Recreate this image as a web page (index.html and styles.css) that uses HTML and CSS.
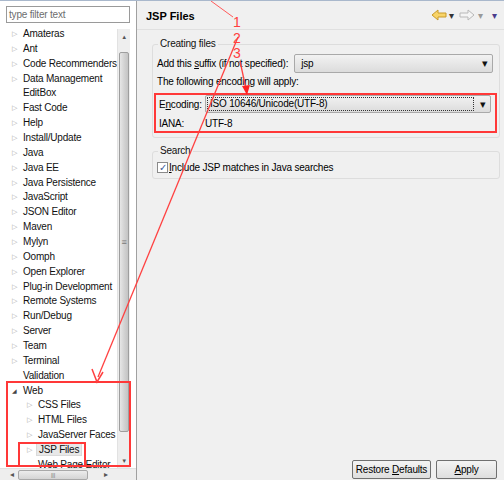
FILE: index.html
```html
<!DOCTYPE html>
<html>
<head>
<meta charset="utf-8">
<link rel="stylesheet" href="styles.css">
</head>
<body>
<div class="app">
  <div class="left">
    <div class="filter">type filter text</div>
    <div class="treewrap">
      <ul class="tree">
        <li><span class="tw">▷</span>Amateras</li>
        <li><span class="tw">▷</span>Ant</li>
        <li><span class="tw">▷</span>Code Recommenders</li>
        <li><span class="tw">▷</span>Data Management</li>
        <li><span class="tw"></span>EditBox</li>
        <li><span class="tw">▷</span>Fast Code</li>
        <li><span class="tw">▷</span>Help</li>
        <li><span class="tw">▷</span>Install/Update</li>
        <li><span class="tw">▷</span>Java</li>
        <li><span class="tw">▷</span>Java EE</li>
        <li><span class="tw">▷</span>Java Persistence</li>
        <li><span class="tw">▷</span>JavaScript</li>
        <li><span class="tw">▷</span>JSON Editor</li>
        <li><span class="tw">▷</span>Maven</li>
        <li><span class="tw">▷</span>Mylyn</li>
        <li><span class="tw">▷</span>Oomph</li>
        <li><span class="tw">▷</span>Open Explorer</li>
        <li><span class="tw">▷</span>Plug-in Development</li>
        <li><span class="tw">▷</span>Remote Systems</li>
        <li><span class="tw">▷</span>Run/Debug</li>
        <li><span class="tw">▷</span>Server</li>
        <li><span class="tw">▷</span>Team</li>
        <li><span class="tw">▷</span>Terminal</li>
        <li><span class="tw"></span>Validation</li>
        <li><span class="tw open">◢</span>Web</li>
        <li class="child"><span class="tw">▷</span>CSS Files</li>
        <li class="child"><span class="tw">▷</span>HTML Files</li>
        <li class="child"><span class="tw">▷</span>JavaServer Faces T</li>
        <li class="child"><span class="tw">▷</span><span class="sel">JSP Files</span></li>
        <li class="child last"><span class="tw"></span>Web Page Editor</li>
      </ul>
      <div class="vscroll">
        <div class="sarrow">▲</div>
        <div class="thumb"><span class="grip">≡</span></div>
        <div class="sarrow down">▼</div>
      </div>
    </div>
    <div class="hscroll">
      <span class="harrow">◂</span>
      <div class="hthumb">|||</div>
      <span class="harrow r">▸</span>
    </div>
  </div>
  <div class="right">
    <div class="header">
      <div class="title">JSP Files</div>
      <div class="nav">
        <svg class="back" width="16" height="12" viewBox="0 0 16 12"><path d="M1 6 L7 1 V4 H15 V8 H7 V11 Z" fill="#f8d468" stroke="#c89a2a" stroke-width="1"/></svg>
        <span class="dd">▾</span>
        <svg class="fwd" width="16" height="12" viewBox="0 0 16 12"><path d="M15 6 L9 1 V4 H1 V8 H9 V11 Z" fill="#f4f4f4" stroke="#b8b8b8" stroke-width="1"/></svg>
        <span class="dd light">▾</span>
        <span class="dd purple">▾</span>
      </div>
    </div>
    <div class="content">
      <fieldset class="group g1">
        <legend>Creating files</legend>
        <div class="row r1">
          <span>Add this <u>s</u>uffix (if not specified):</span>
          <div class="combo suffix"><span>jsp</span><span class="carr">▾</span></div>
        </div>
        <div class="row r2">The following encoding will apply:</div>
        <div class="enc">
          <div class="row r3">
            <span class="lab">E<u>n</u>coding:</span>
            <div class="combo encc"><span class="focus">ISO 10646/Unicode(UTF-8)</span><span class="carr">▾</span></div>
          </div>
          <div class="row r3 iana"><span class="lab">IANA:</span><span>UTF-8</span></div>
        </div>
      </fieldset>
      <fieldset class="group g2">
        <legend>Search</legend>
        <div class="row chk"><span class="box">✓</span><span><u>I</u>nclude JSP matches in Java searches</span></div>
      </fieldset>
      <div class="spacer"></div>
      <div class="buttons">
        <div class="btn restore">Restore <u>D</u>efaults</div>
        <div class="btn apply"><u>A</u>pply</div>
      </div>
    </div>
  </div>
  <div class="mark webbox"></div>
  <div class="mark jspbox"></div>
  <svg class="anno" width="504" height="480" viewBox="0 0 504 480">
    <line x1="211" y1="0" x2="233" y2="16" stroke="#ff5a5a" stroke-width="1"/>
    <line x1="238" y1="36" x2="98" y2="376" stroke="#ff4040" stroke-width="1.3"/>
    <path d="M92 368 L97 381 L103 371" fill="none" stroke="#ff4040" stroke-width="1.5"/>
    <line x1="240" y1="60" x2="246" y2="88" stroke="#ff4040" stroke-width="1.3"/>
    <path d="M242 85 L247 94 L250 84 Z" fill="#ff2020"/>
    <text x="233" y="26" class="num">1</text>
    <text x="233" y="42" class="num">2</text>
    <text x="233" y="57" class="num">3</text>
  </svg>
</div>
</body>
</html>
```
FILE: styles.css
```css
* { box-sizing: border-box; }
html, body { margin: 0; padding: 0; }
body {
  width: 504px; height: 480px; overflow: hidden;
  font-family: "Liberation Sans", Arial, sans-serif;
  font-size: 10px; letter-spacing: -0.2px; color: #000;
  background: #f0f0f0;
}
.app {
  position: relative;
  display: flex;
  width: 504px; height: 480px;
  border-top: 1px solid #a9b8cc;
}
.left {
  width: 137px;
  background: #fff;
  border-right: 1px solid #a0a0a0;
  display: flex; flex-direction: column;
}
.filter {
  margin: 5px 6px 0 6px;
  height: 17px;
  border: 1px solid #9a9a9a;
  color: #6d6d6d;
  padding: 1px 0 0 2px;
  line-height: 13px;
}
.treewrap {
  flex: 1;
  display: flex;
  margin-top: 4px;
  overflow: hidden;
}
.tree {
  list-style: none; margin: 0; padding: 0;
  width: 117px; overflow: hidden;
}
.tree li {
  height: 14.86px; line-height: 14.86px;
  white-space: nowrap;
  padding-left: 12px;
  color: #111;
}
.tree li.child { padding-left: 27px; }
.tw {
  display: inline-block; width: 11px;
  font-size: 7px; color: #a8a8a8;
  vertical-align: top;
}
.tw.open { color: #444; font-size: 6px; }
.sel {
  background: #e8e8e8;
  border: 1px solid #dadada;
  padding: 0 2px;
  margin-left: -2px;
}
.vscroll {
  width: 13px;
  background: #eeeeee;
  border-left: 1px solid #e2e2e2;
  display: flex; flex-direction: column;
  margin-right: 6px;
  margin-top: 2px;
}
.sarrow {
  height: 23px; font-size: 6px; color: #555;
  text-align: center; line-height: 17px;
}
.sarrow.down { height: 14px; margin-top: auto; line-height: 14px; }
.thumb {
  height: 380px;
  margin: 0 1px;
  background: linear-gradient(to right, #e6e6e6, #d0d0d0 60%, #c4c4c4);
  border: 1px solid #9e9e9e;
  border-radius: 2px;
  display: flex; align-items: center; justify-content: center;
}
.grip { font-size: 9px; color: #777; }
.hscroll {
  height: 12px;
  display: flex; align-items: center;
  background: #eeeeee;
  border-top: 1px solid #e2e2e2;
  padding-left: 10px;
}
.harrow { font-size: 8px; color: #555; width: 8px; }
.harrow.r { margin-left: 16px; }
.hthumb {
  width: 70px; height: 10px;
  border: 1px solid #a8a8a8; border-radius: 2px;
  background: linear-gradient(#ececec, #d4d4d4);
  font-size: 6px; line-height: 8px; color: #777;
  text-align: center;
}
.right {
  flex: 1;
  display: flex; flex-direction: column;
  background: #f0f0f0;
}
.header {
  height: 29px;
  display: flex; align-items: center;
  justify-content: space-between;
  border-bottom: 1px solid #e0e0e0;
  padding: 0 6px 0 9px;
}
.title { font-weight: bold; font-size: 11px; letter-spacing: 0; margin-top: 1px; }
.nav { display: flex; align-items: center; }
.dd { font-size: 10px; color: #333; width: 8px; text-align: center; }
.fwd { margin-left: 4px; }
.dd.light { color: #999; margin-left: 1px; }
.dd.purple { color: #4a3c8c; margin-left: 6px; }
.content {
  flex: 1;
  display: flex; flex-direction: column;
  padding: 8px 4px 0 15px;
}
.group {
  margin: 0;
  border: 1px solid #dddddd;
  border-radius: 3px;
  padding: 0 4px 4px 4px;
}
.group legend {
  padding: 0 2px;
  margin-left: 1px;
  color: #111;
  line-height: 12px;
}
.row {
  display: flex; align-items: center;
  white-space: nowrap;
}
.r1 { height: 20px; margin-top: 3px; }
.r2 { height: 16px; }
.r3 { height: 18px; }
.iana { padding-top: 3px; }
.combo {
  display: flex; align-items: center; justify-content: space-between;
  border: 1px solid #a9a9a9; border-radius: 2px;
  background: linear-gradient(#f2f2f2, #dcdcdc);
  height: 19px;
  padding: 0 4px 0 6px;
}
.suffix { margin-left: 6px; flex: 1; margin-right: 2px; }
.carr { font-size: 11px; color: #111; }
.enc {
  margin: 4px -2px 0 -3px;
  padding: 0 4px 0 3px;
  border: 2px solid #ff3838;
}
.lab { width: 46px; display: inline-block; }
.encc { flex: 1; height: 18px; padding-left: 1px; }
.focus {
  border: 1px dotted #333;
  flex: 1; margin-right: 6px;
  padding-left: 2px; line-height: 12px;
}
.g2 { margin-top: 7px; padding-bottom: 1px; }
.chk { gap: 1px; height: 19px; margin-top: 1px; }
.box {
  width: 11px; height: 11px;
  border: 1px solid #8a8a8a;
  background: #fff;
  font-size: 10px; line-height: 9px; color: #3c5a9a;
  text-align: center; letter-spacing: 0;
}
.spacer { flex: 1; }
.buttons {
  display: flex; justify-content: flex-end; gap: 5px;
  padding-bottom: 1px; padding-right: 3px;
}
.btn {
  height: 19px;
  border: 1px solid #707070; border-radius: 2px;
  background: linear-gradient(#f4f4f4, #dedede);
  text-align: center; line-height: 17px;
}
.restore { width: 79px; }
.apply { width: 61px; }
.mark {
  position: absolute;
  border: 2px solid #ff3838;
}
.webbox { left: 6px; top: 380px; width: 125px; height: 86px; }
.jspbox { left: 18px; top: 441px; width: 68px; height: 25px; }
.anno { position: absolute; left: 0; top: 0; pointer-events: none; }
.num { fill: #ff4040; font-family: "Liberation Sans", Arial, sans-serif; font-size: 14px; }
```
